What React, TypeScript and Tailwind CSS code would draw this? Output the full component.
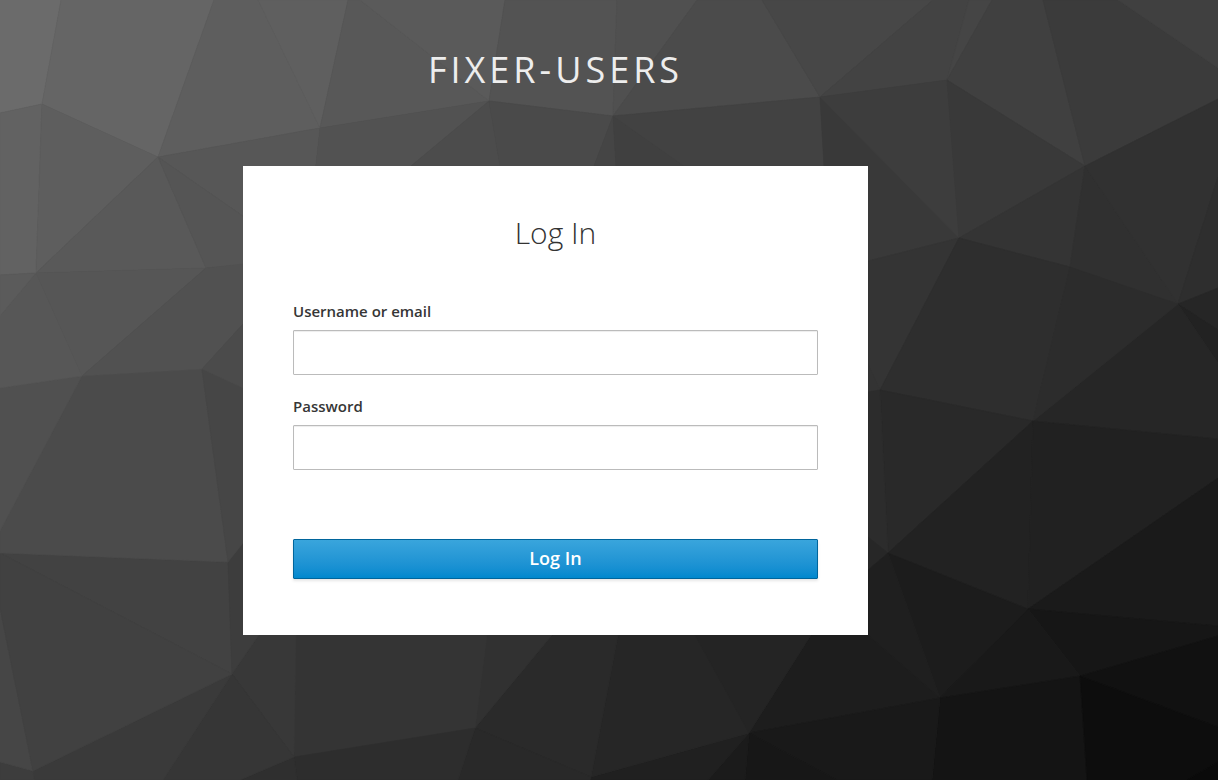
const facets: [string, string][] = [
  ["0,0 61,0 42,104 0,113", "#6b6b6b"],
  ["61,0 214,0 158,157 42,104", "#656565"],
  ["214,0 258,0 320,128 158,157", "#5e5e5e"],
  ["258,0 348,0 320,128", "#5f5f5f"],
  ["348,0 360,0 489,101 320,128", "#585858"],
  ["360,0 505,0 489,101", "#5a5a5a"],
  ["505,0 617,0 613,116 489,101", "#535353"],
  ["617,0 697,0 613,116", "#505050"],
  ["697,0 762,0 820,97 613,116", "#4b4b4b"],
  ["762,0 933,0 820,97", "#474747"],
  ["933,0 969,0 947,80 820,97", "#434343"],
  ["969,0 992,0 947,80", "#454545"],
  ["992,0 1043,0 1085,166 947,80", "#404040"],
  ["1043,0 1118,0 1218,68 1218,99 1085,166", "#3b3b3b"],
  ["1118,0 1218,0 1218,68", "#404040"],
  ["0,113 42,104 36,273 0,275", "#626262"],
  ["42,104 158,157 36,273", "#5e5e5e"],
  ["158,157 206,268 36,273", "#595959"],
  ["158,157 320,128 312,200 300,256", "#575757"],
  ["158,157 300,256 300,260 206,268", "#555555"],
  ["320,128 489,101 411,166 312,200", "#525252"],
  ["489,101 500,166 411,166", "#4c4c4c"],
  ["489,101 613,116 594,166 500,166", "#4a4a4a"],
  ["613,116 616,166 594,166", "#454545"],
  ["613,116 684,166 616,166", "#404040"],
  ["613,116 820,97 824,166 684,166", "#424242"],
  ["820,97 959,238 868,261 824,166", "#393939"],
  ["820,97 947,80 959,238", "#3d3d3d"],
  ["947,80 1085,166 959,238", "#393939"],
  ["959,238 1085,166 1070,267", "#343434"],
  ["1085,166 1178,304 1070,267", "#303030"],
  ["1085,166 1218,99 1218,177 1178,304", "#313131"],
  ["1218,177 1178,304 1218,288", "#2e2e2e"],
  ["1178,304 1218,288 1218,330", "#262626"],
  ["1178,304 1218,330 1218,363", "#222222"],
  ["1178,304 1218,363 1218,439 1033,421", "#262626"],
  ["868,261 959,238 880,390 868,364", "#343434"],
  ["868,364 880,390 868,392", "#333333"],
  ["959,238 1070,267 1033,421 880,390", "#2e2e2e"],
  ["1070,267 1178,304 1033,421", "#2c2c2c"],
  ["880,390 1033,421 888,553", "#292929"],
  ["868,392 880,390 888,553 868,537", "#2c2c2c"],
  ["868,537 888,553 868,570", "#272727"],
  ["1033,421 888,553 1028,609", "#222222"],
  ["1033,421 1218,439 1218,478 1028,609", "#212121"],
  ["1218,478 1028,609 1218,626", "#1a1a1a"],
  ["1028,609 1218,626 1218,636 1080,676", "#161616"],
  ["888,553 1028,609 940,698", "#1c1c1c"],
  ["1028,609 1080,676 940,698", "#191919"],
  ["868,570 888,553 940,698 868,635", "#1f1f1f"],
  ["940,698 1080,676 1087,780 932,780", "#141414"],
  ["1080,676 1218,636 1218,727", "#111111"],
  ["1080,676 1218,727 1218,762 1187,780 1087,780", "#0d0d0d"],
  ["1218,762 1218,780 1187,780", "#0a0a0a"],
  ["811,635 868,635 940,698 749,733", "#1d1d1d"],
  ["749,733 940,698 932,780 837,780", "#191919"],
  ["749,733 837,780 745,780", "#171717"],
  ["749,733 745,780 708,780", "#1b1b1b"],
  ["591,777 749,733 708,780 590,780", "#202020"],
  ["618,635 695,635 749,733 591,777", "#262626"],
  ["695,635 811,635 749,733", "#242424"],
  ["475,728 552,635 618,635 591,777", "#2a2a2a"],
  ["475,728 591,777 590,780 458,780", "#292929"],
  ["487,635 552,635 475,728", "#313131"],
  ["296,635 487,635 475,728 294,757", "#343434"],
  ["294,757 475,728 458,780 297,780", "#2d2d2d"],
  ["294,757 297,780 240,780", "#2f2f2f"],
  ["259,635 296,635 294,757 232,674", "#383838"],
  ["232,674 294,757 240,780 163,780", "#363636"],
  ["232,674 163,780 34,780 33,771", "#3a3a3a"],
  ["0,762 33,771 34,780 0,780", "#3d3d3d"],
  ["0,608 33,771 0,762", "#464646"],
  ["0,553 228,562 232,674", "#424242"],
  ["0,553 232,674 33,771 0,608", "#414141"],
  ["228,562 243,543 259,635 232,674", "#3d3d3d"],
  ["82,376 202,369 228,562 0,553 0,531", "#4b4b4b"],
  ["202,369 243,388 243,543 228,562", "#464646"],
  ["0,388 82,376 0,531", "#505050"],
  ["36,273 206,268 82,376", "#565656"],
  ["0,316 36,273 82,376 0,388", "#575757"],
  ["0,275 36,273 0,316", "#5b5b5b"],
  ["206,268 243,264 243,324 202,369 82,376", "#515151"],
  ["202,369 243,324 243,388", "#4b4b4b"],
];

function Backdrop() {
  return (
    <svg
      className="absolute inset-0 -z-10 h-full w-full"
      viewBox="0 0 1218 780"
      preserveAspectRatio="xMidYMid slice"
      aria-hidden="true"
    >
      <rect width="1218" height="780" fill="#3c3c3c" />
      {facets.map(([points, fill]) => (
        <polygon key={points} points={points} fill={fill} stroke={fill} strokeWidth="0.6" />
      ))}
    </svg>
  );
}

function Field({ id, label, type }: { id: string; label: string; type: string }) {
  return (
    <div>
      <label htmlFor={id} className="block text-[15px] leading-6 font-semibold text-[#363636]">
        {label}
      </label>
      <input
        id={id}
        name={id}
        type={type}
        className="mt-[7px] block h-[45px] w-full rounded-[1px] border border-[#bbbbbb] bg-white px-2 text-lg text-[#333333] shadow-[inset_0_1px_1px_rgba(3,3,3,0.075)] outline-none focus:border-[#0088ce]"
      />
    </div>
  );
}

export default function App() {
  return (
    <div className="relative isolate min-h-screen overflow-hidden pr-[107px] font-['Open_Sans','Noto_Sans',sans-serif]">
      <Backdrop />
      <header className="pt-[45px] pb-[71px] text-center text-4xl leading-[50px] tracking-[4px] text-[#ededed] uppercase">
        fixer-users
      </header>
      <main className="mx-auto max-w-[625px] bg-white px-[50px] pt-11 pb-14">
        <h1 className="text-center text-3xl leading-[45px] font-light text-[#333333]">Log In</h1>
        <form className="mt-11" onSubmit={(event) => event.preventDefault()}>
          <div className="flex flex-col gap-[19px]">
            <Field id="username" label="Username or email" type="text" />
            <Field id="password" label="Password" type="password" />
          </div>
          <button
            type="submit"
            className="mt-[69px] block h-10 w-full rounded-[1px] border border-[#00659c] bg-linear-to-b from-[#39a5dc] to-[#0088ce] pb-0.5 text-lg leading-6 font-semibold text-white shadow-[0_2px_3px_rgba(3,3,3,0.1)]"
          >
            Log In
          </button>
        </form>
      </main>
    </div>
  );
}
